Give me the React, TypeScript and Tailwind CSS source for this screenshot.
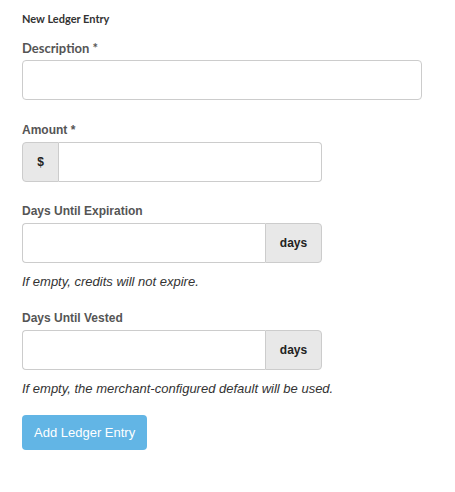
export default function App() {
  return (
    <div className="min-h-[492px] bg-white px-[22px] pt-[11px] font-['Liberation_Sans',Arial,sans-serif] text-[#333]">
      <h4 className="font-['Lato',sans-serif] text-[11px] font-bold leading-[16px]">New Ledger Entry</h4>

      <div className="mt-[13px]">
        <label className="block font-['Lato',sans-serif] text-[13px] font-bold leading-[16px] text-[#555]">
          Description *
        </label>
        <input className="mt-[4px] block h-[40px] w-[400px] rounded-[4px] border border-[#ccc] bg-white px-3 text-[13px] outline-none" />
      </div>

      <div className="mt-[22px]">
        <label className="block text-[12px] font-bold leading-[16px] text-[#555]">Amount *</label>
        <div className="mt-[4px] flex h-[40px] w-[300px]">
          <span className="flex w-[37px] items-center justify-center rounded-l-[4px] border border-[#ccc] bg-[#e8e8e8] text-[12px] font-bold text-[#222]">
            $
          </span>
          <input className="min-w-0 flex-1 rounded-r-[4px] border border-l-0 border-[#ccc] px-3 text-[13px] outline-none" />
        </div>
      </div>

      <div className="mt-[21px]">
        <label className="block text-[12px] font-bold leading-[16px] text-[#555]">Days Until Expiration</label>
        <div className="mt-[4px] flex h-[40px] w-[300px]">
          <input className="min-w-0 flex-1 rounded-l-[4px] border border-r-0 border-[#ccc] px-3 text-[13px] outline-none" />
          <span className="flex w-[57px] items-center justify-center rounded-r-[4px] border border-[#ccc] bg-[#e8e8e8] text-[12px] font-bold text-[#222]">
            days
          </span>
        </div>
        <p className="mt-[11px] text-[13px] italic leading-[16px] text-[#333]">If empty, credits will not expire.</p>
      </div>

      <div className="mt-[20px]">
        <label className="block text-[12px] font-bold leading-[16px] text-[#555]">Days Until Vested</label>
        <div className="mt-[4px] flex h-[40px] w-[300px]">
          <input className="min-w-0 flex-1 rounded-l-[4px] border border-r-0 border-[#ccc] px-3 text-[13px] outline-none" />
          <span className="flex w-[57px] items-center justify-center rounded-r-[4px] border border-[#ccc] bg-[#e8e8e8] text-[12px] font-bold text-[#222]">
            days
          </span>
        </div>
        <p className="mt-[11px] text-[13px] italic leading-[16px] text-[#333]">
          If empty, the merchant-configured default will be used.
        </p>
      </div>

      <button className="mt-[18px] h-[35px] rounded-[4px] bg-[#62b5e5] px-[12px] text-[13px] text-white">
        Add Ledger Entry
      </button>
    </div>
  );
}
